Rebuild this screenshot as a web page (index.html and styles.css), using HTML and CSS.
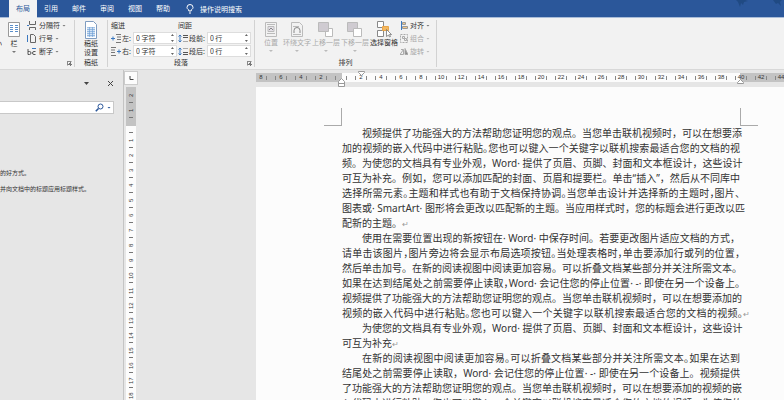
FILE: index.html
```html
<!DOCTYPE html>
<html lang="zh-CN">
	<head>
		<meta charset="utf-8">
		<title>布局</title>
		<link rel="stylesheet" href="styles.css">
	</head>
	<body>
		<!-- 顶部选项卡 -->
		<nav class="tabs">
			<a class="tab active" href="#">布局</a>
			<a class="tab" href="#">引用</a>
			<a class="tab" href="#">邮件</a>
			<a class="tab" href="#">审阅</a>
			<a class="tab" href="#">视图</a>
			<a class="tab" href="#">帮助</a>
			<a class="tell" href="#">
				<svg width="8" height="10" viewBox="0 0 8 10" fill="none" stroke="#fff"><path d="M2.8 7V6C1.6 5.2 1 4.4 1 3.4a3 2.9 0 0 1 6 0C7 4.400 6.400 5.200 5.200 6v1zM3 9h2"/></svg>
				操作说明搜索
			</a>
			<svg class="deco" width="48" height="8" viewBox="0 0 48 8" fill="#204a83"><path d="M0 0h9l3 1-4 1-1 3-2-2-1 4-2-5zM37 0h9l-2 2 1 4-3-3-2 1z"/></svg>
		</nav>

		<!-- 功能区 -->
		<div class="ribbon">
			<section class="group setup">
				<div class="tools">
					<button class="big cut"><span>小</span></button>
					<button class="big col">
						<svg width="14" height="17" viewBox="0 0 14 17"><path d="M1.5 1.5h11v14h-11z" fill="#fff" stroke="#999"/><path d="M3 4.500h3M8 4.500h3M3 6.500h3M8 6.500h3M3 8.500h3M8 8.500h3M3 10.500h3M8 10.500h3" stroke="#5b8fca"/></svg>
						<span>栏</span><i class="down"></i>
					</button>
					<div class="stack">
						<button><svg width="10" height="9" viewBox="0 0 10 9" fill="none" stroke="#666"><path d="M2.500 0v3.500h6V0M2.500 9V6.500h6V9"/><path d="M0 4.500h2" stroke="#3b78c0"/></svg>分隔符<i class="down"></i></button>
						<button><svg width="10" height="9" viewBox="0 0 10 9" fill="none" stroke="#666"><path d="M3.500.5h3l2 2v6h-5z"/><path d="M.5 1v7" stroke="#3b78c0"/></svg>行号<i class="down"></i></button>
						<button><svg width="10" height="9" viewBox="0 0 10 9" fill="none" stroke="#555"><path d="M1 2v5.500h1.500a1.500 1.500 0 0 0 0-3H1M8.500 4.500H7a1.500 1.500 0 0 0 0 3h1.500"/><path d="M5 1.500h4" stroke="#3b78c0"/></svg>断字<i class="down"></i></button>
					</div>
				</div>
				<h2></h2>
				<button class="launch" aria-label="页面设置"></button>
			</section>

			<section class="group paper">
				<div class="tools">
					<button class="big">
						<svg width="14" height="18" viewBox="0 0 14 18"><path d="M1.500.5h8l3 3v14h-11z" fill="#fff" stroke="#7f9cc0"/><path d="M3 7h8v9H3z" fill="#d3e3f5"/><path d="M3 6.500h8M3 8.500h8M3 10.500h8M3 12.500h8M3 14.500h8M5.500 6v10M8.500 6v10" stroke="#6a9cd4" stroke-width=".6"/></svg>
						<span>稿纸<br>设置</span>
					</button>
				</div>
				<h2>稿纸</h2>
			</section>

			<section class="group para">
				<div class="tools">
					<div class="fields">
						<h3>缩进</h3>
						<label><svg width="10" height="9" viewBox="0 0 10 9"><path d="M0 4.500h4M2 2.500v4" stroke="#3b78c0"/><path d="M5 .5h5M6 3h4M6 5.500h4M5 8.500h5" stroke="#777"/></svg>左:<span class="box"><input type="text" value="0 字符"><i class="spin"></i></span></label>
						<label><svg width="10" height="9" viewBox="0 0 10 9"><path d="M6 4.500h4M8 2.500v4" stroke="#3b78c0"/><path d="M0 .5h5M0 3h4M0 5.500h4M0 8.500h5" stroke="#777"/></svg>右:<span class="box"><input type="text" value="0 字符"><i class="spin"></i></span></label>
					</div>
					<div class="fields">
						<h3>间距</h3>
						<label><svg width="10" height="9" viewBox="0 0 10 9"><path d="M2 1v7M.5 2.500 2 1l1.500 1.500M.5 6.500 2 8l1.500-1.500" fill="none" stroke="#3b78c0"/><path d="M5 1.500h5M5 3.500h5" stroke="#555"/><path d="M5 7.500h5" stroke="#aaa"/></svg>段前:<span class="box"><input type="text" value="0 行"><i class="spin"></i></span></label>
						<label><svg width="10" height="9" viewBox="0 0 10 9"><path d="M2 1v7M.5 2.500 2 1l1.500 1.500M.5 6.500 2 8l1.500-1.500" fill="none" stroke="#3b78c0"/><path d="M5 1.500h5" stroke="#aaa"/><path d="M5 5.500h5M5 7.500h5" stroke="#555"/></svg>段后:<span class="box"><input type="text" value="0 行"><i class="spin"></i></span></label>
					</div>
				</div>
				<h2>段落</h2>
				<button class="launch" aria-label="段落设置"></button>
			</section>

			<section class="group arrange">
				<div class="tools">
					<button class="big off">
						<svg width="14" height="17" viewBox="0 0 14 17" fill="none" stroke="#bbb"><path d="M1.500 1.500h11v14h-11zM3 3.500h8M3 12.500h8"/><path d="M4 5.500h6v5H4z" fill="#e4e0e8"/><path d="m5 9 2-2 2 2" stroke="#888"/></svg>
						<span>位置</span><i class="down"></i>
					</button>
					<button class="big off">
						<svg width="14" height="17" viewBox="0 0 14 17" fill="none" stroke="#bbb"><path d="M1.500 1.500h8l3 3v11h-11zM3 5.500h6M3 13.500h8"/><path d="M4 12V9.500a3 3 0 0 1 6 0V12" stroke="#888"/></svg>
						<span>环绕文字</span><i class="down"></i>
					</button>
					<button class="big off">
						<svg width="15" height="17" viewBox="0 0 15 17" stroke="#bbb"><path d="M7.500 7.500h7v8h-7z" fill="#fff"/><path d="M.5 1.500h10v9H.5z" fill="#cfcbd1"/></svg>
						<span>上移一层</span><i class="down"></i>
					</button>
					<button class="big off">
						<svg width="15" height="17" viewBox="0 0 15 17" stroke="#bbb"><path d="M.5 1.500h10v9H.5z" fill="#cfcbd1"/><path d="M6.500 7.500h8v8h-8z" fill="#fff"/></svg>
						<span>下移一层</span><i class="down"></i>
					</button>
					<button class="big">
						<svg width="16" height="17" viewBox="0 0 16 17" fill="#fff" stroke="#888"><path d="M1.500.5h6v6h-6zM1.500 9.500h6v6h-6z"/><path d="M6.500 5.500h6v4h-6z" fill="#f4b75e" stroke="#e9a64a"/><path d="M10.500 8.500v7l2-1.500 1 2 1-.5-1-2h2z" stroke="#666" stroke-width=".7"/></svg>
						<span>选择窗格</span>
					</button>
					<div class="stack">
						<button><svg width="8" height="9" viewBox="0 0 8 9"><path d="M1.500 0v9" stroke="#3b78c0"/><path d="M2.500 1.500h3v2h-3zM2.500 5.500h5v2h-5z" fill="#f3c888" stroke="#999"/></svg>对齐<i class="down"></i></button>
						<button class="off"><svg width="8" height="9" viewBox="0 0 8 9" fill="none" stroke="#aaa"><path d="M.5.5h7v8h-7z" stroke-dasharray="2 1"/><path d="M2.500 2.500h2v2h-2zM4.500 4.500h2v2h-2z"/></svg>组合<i class="down"></i></button>
						<button class="off"><svg width="8" height="9" viewBox="0 0 8 9" fill="none" stroke="#aaa"><path d="M0 7.500h3.500v-5zM1 2.500h2"/><path d="M5 1.500v6h3z" fill="#888"/></svg>旋转<i class="down"></i></button>
					</div>
				</div>
				<h2>排列</h2>
			</section>
		</div>

		<main class="work">
			<!-- 导航窗格 -->
			<aside class="pane">
				<div class="pane-head">
					<button aria-label="选项"><i class="down"></i></button>
					<button aria-label="关闭"><svg width="7" height="7" viewBox="0 0 7 7" stroke="#444"><path d="m1 1 5 5M6 1 1 6"/></svg></button>
				</div>
				<div class="search">
					<input type="text" aria-label="搜索文档">
					<button aria-label="搜索"><svg width="9" height="9" viewBox="0 0 9 9" fill="none" stroke="#2b579a"><circle cx="5.500" cy="3.500" r="2.500"/><path d="M3.500 5.500.8 8.200" stroke-width="1.600"/></svg></button>
					<i class="down"></i>
				</div>
				<p>的好方式。</p>
				<p>并向文档中的标题应用标题样式。</p>
			</aside>

			<!-- 垂直标尺 -->
			<div class="side">
				<button class="tabstop" aria-label="制表符"><svg width="5" height="5" viewBox="0 0 5 5" fill="none" stroke="#444"><path d="M1 0v3.500h3.500"/></svg></button>
				<div class="vruler">
					<span>2</span><span>1</span><span></span><span>1</span><span>2</span><span>3</span><span>4</span><span>5</span><span>6</span><span>7</span><span>8</span><span>9</span><span>10</span><span>11</span><span>12</span><span>13</span><span>14</span><span>15</span><span>16</span><span>17</span><span>18</span>
				</div>
			</div>

			<div class="editor">
				<!-- 水平标尺 -->
				<div class="hruler">
					<div class="scale">
						<span>8</span><span>6</span><span>4</span><span>2</span><span></span><span>2</span><span>4</span><span>6</span><span>8</span><span>10</span><span>12</span><span>14</span><span>16</span><span>18</span><span>20</span><span>22</span><span>24</span><span>26</span><span>28</span><span>30</span><span>32</span><span>34</span><span>36</span><span>38</span><span>40</span><span>42</span><span>44</span>
					</div>
					<svg class="mark first" width="7" height="5" viewBox="0 0 7 5" fill="#fff" stroke="#999"><path d="M.5.5h6v1l-3 3-3-3z"/></svg>
					<svg class="mark hang" width="7" height="9" viewBox="0 0 7 9" fill="#fff" stroke="#999"><path d="M.5 8.500v-5l3-3 3 3v5zM.5 5.500h6"/></svg>
					<svg class="mark right" width="7" height="5" viewBox="0 0 7 5" fill="#fff" stroke="#999"><path d="M.5 4.500v-1l3-3 3 3v1z"/></svg>
				</div>

				<article class="page">
					<div class="corners"><i></i><i></i></div>
					<div class="doc">
						<p>
							<span class="line">视频提供了功能强大的方法帮助您证明您的观点。当您单击联机视频时，可以在想要添</span>
							<span class="line tight">加的视频的嵌入代码中进行粘贴。您也可以键入一个关键字以联机搜索最适合您的文档的视</span>
							<span class="line">频。为使您的文档具有专业外观，Word· 提供了页眉、页脚、封面和文本框设计，这些设计</span>
							<span class="line">可互为补充。例如，您可以添加匹配的封面、页眉和提要栏。单击“插入”，然后从不同库中</span>
							<span class="line tight">选择所需元素。主题和样式也有助于文档保持协调。当您单击设计并选择新的主题时，图片、</span>
							<span class="line">图表或· SmartArt· 图形将会更改以匹配新的主题。当应用样式时，您的标题会进行更改以匹</span>
							<span class="line end">配新的主题。<b>↵</b></span>
						</p>
						<p>
							<span class="line">使用在需要位置出现的新按钮在· Word· 中保存时间。若要更改图片适应文档的方式，</span>
							<span class="line tight">请单击该图片，图片旁边将会显示布局选项按钮。当处理表格时，单击要添加行或列的位置，</span>
							<span class="line">然后单击加号。在新的阅读视图中阅读更加容易。可以折叠文档某些部分并关注所需文本。</span>
							<span class="line tight">如果在达到结尾处之前需要停止读取，Word· 会记住您的停止位置· -· 即使在另一个设备上。</span>
							<span class="line">视频提供了功能强大的方法帮助您证明您的观点。当您单击联机视频时，可以在想要添加的</span>
							<span class="line tight">视频的嵌入代码中进行粘贴。您也可以键入一个关键字以联机搜索最适合您的文档的视频。<b>↵</b></span>
						</p>
						<p>
							<span class="line">为使您的文档具有专业外观，Word· 提供了页眉、页脚、封面和文本框设计，这些设计</span>
							<span class="line end">可互为补充<b>↵</b></span>
						</p>
						<p>
							<span class="line tight">在新的阅读视图中阅读更加容易。可以折叠文档某些部分并关注所需文本。如果在达到</span>
							<span class="line">结尾处之前需要停止读取，Word· 会记住您的停止位置· -· 即使在另一个设备上。视频提供</span>
							<span class="line">了功能强大的方法帮助您证明您的观点。当您单击联机视频时，可以在想要添加的视频的嵌</span>
							<span class="line">入代码中进行粘贴。您也可以键入一个关键字以联机搜索最适合您的文档的视频。为使您的</span>
						</p>
					</div>
				</article>
			</div>
		</main>
	</body>
</html>
```

FILE: styles.css
```css
*{
	margin: 0;
	padding: 0;
	box-sizing: border-box;
}
body{
	display: flex;
	flex-direction: column;
	height: 100vh;
	overflow: hidden;
	background-color: #e6e6e6;
	color: #333;
	font: 7px/9px "Noto Sans CJK SC", sans-serif;
}
button{
	border: none;
	background: none;
	font: inherit;
	color: inherit;
	white-space: nowrap;
}
svg{
	flex: none;
}
a{
	color: #fff;
	text-decoration: none;
}
/* 下拉小三角 */
.down{
	flex: none;
	width: 4px;
	height: 2px;
	background-color: #777;
	clip-path: polygon(0 0, 100% 0, 50% 100%);
}
/* 选项卡 */
.tabs{
	flex: none;
	display: flex;
	height: 18px;
	padding-left: 9px;
	background-color: #2b579a;
	border-bottom: 1px solid #a9bcd8;
	line-height: 16px;
}
.tab{
	width: 28px;
	text-align: center;
}
.active{
	height: 18px;
	background-color: #f3f3f3;
	color: #2b579a;
}
.tell{
	display: flex;
	align-items: center;
	gap: 6px;
	margin-left: 9px;
}
.deco{
	margin-left: auto;
}
/* 功能区 */
.ribbon{
	flex: none;
	display: flex;
	height: 52px;
	padding: 2px 0;
	background-color: #f2f2f2;
	border-bottom: 1px solid #d8d8d8;
}
.group{
	position: relative;
	display: flex;
	flex-direction: column;
	justify-content: space-between;
	border-right: 1px solid #d2d2d2;
}
.group h2{
	font-size: 7px;
	font-weight: normal;
	text-align: center;
}
.tools{
	display: flex;
}
.big{
	display: flex;
	flex-direction: column;
	align-items: center;
	padding-top: 1px;
}
.big .down{
	margin-top: 3px;
}
.off{
	color: #aaa;
}
.off .down{
	background-color: #bbb;
}
.cut{
	width: 6px;
	padding-top: 19px;
	overflow: hidden;
	align-items: flex-end;
}
.col{
	padding-left: 5px;
}
.col span{
	margin-top: 1px;
}
.stack{
	display: flex;
	flex-direction: column;
	gap: 4px;
	padding: 1px 8px 0 6px;
}
.stack button{
	display: flex;
	align-items: center;
	gap: 2px;
}
.launch{
	position: absolute;
	right: 2px;
	bottom: 1px;
	width: 5px;
	height: 5px;
	border: 1px solid #888;
	border-right-color: transparent;
	border-bottom-color: transparent;
	background: linear-gradient(135deg, transparent 50%, #777 50%);
}
.setup{
	width: 75px;
}
.paper .tools{
	padding: 0 9px;
}
.para .tools{
	gap: 1px;
	padding: 0 3px;
}
.fields{
	display: flex;
	flex-direction: column;
	gap: 1px;
	padding-top: 1px;
}
.fields h3{
	height: 10px;
	font-size: 7px;
	font-weight: normal;
}
.fields label{
	display: flex;
	align-items: center;
	gap: 1px;
}
.box{
	display: flex;
	align-items: center;
	width: 44px;
	height: 12px;
	margin-left: 1px;
	padding: 0 2px;
	background-color: #fff;
	border: 1px solid #ddd;
}
.box input{
	flex: 1;
	min-width: 0;
	border: none;
	font: inherit;
	color: inherit;
}
.spin{
	width: 3px;
	height: 8px;
	background-color: #666;
	clip-path: polygon(50% 0, 100% 25%, 0 25%, 50% 0, 50% 100%, 0 75%, 100% 75%, 50% 100%);
}
.arrange .tools{
	gap: 1px;
	padding-left: 9px;
}
.arrange .tools .big{
	min-width: 14px;
}
.arrange .big:nth-child(2){
	margin-left: 4px;
}
.arrange .stack{
	padding: 1px 6px 0 1px;
}
/* 工作区 */
.work{
	flex: 1;
	display: flex;
	min-height: 0;
}
.pane{
	flex: none;
	width: 124px;
	border-right: 1px solid #c4c4c4;
	overflow: hidden;
	white-space: nowrap;
}
.pane-head{
	display: flex;
	justify-content: flex-end;
	align-items: center;
	gap: 18px;
	height: 31px;
	padding: 0 9px 4px 0;
}
.pane-head button{
	display: flex;
}
.pane-head .down{
	width: 5px;
	height: 3px;
	background-color: #444;
}
.search{
	display: flex;
	align-items: center;
	gap: 3px;
	height: 13px;
	margin: 0 9px 54px 0;
	padding-right: 2px;
	background-color: #fff;
	border: 1px solid #c8c8c8;
	border-left: none;
}
.search input{
	flex: 1;
	min-width: 0;
	border: none;
	outline: none;
	font: inherit;
}
.search button{
	display: flex;
}
.search .down{
	background-color: #2b579a;
}
.pane p{
	margin-bottom: 7px;
	font-size: 6px;
}
/* 垂直标尺 */
.side{
	flex: none;
	width: 14px;
	overflow: hidden;
}
.tabstop{
	display: flex;
	align-items: center;
	justify-content: center;
	width: 14px;
	height: 14px;
	margin-top: 1px;
	background-color: #fcfcfc;
	border: 1px solid #ccc;
}
.vruler{
	width: 10px;
	margin: 2px 0 0 2px;
	padding-top: 1px;
	background: linear-gradient(#c3c3c3 39px, #fcfcfc 39px);
}
.vruler span{
	display: flex;
	align-items: center;
	justify-content: center;
	width: 10px;
	height: 15px;
	font: 6px/10px "Liberation Sans", sans-serif;
	/* 数字朝左侧躺 */
	writing-mode: vertical-rl;
	transform: rotate(180deg);
	background: linear-gradient(#777, #777) center top / 4px 1px no-repeat;
}
/* 编辑区 */
.editor{
	flex: 1;
	display: flex;
	flex-direction: column;
	min-width: 0;
	margin-left: 118px;
}
.hruler{
	flex: none;
	position: relative;
	height: 17px;
	padding-top: 3px;
}
.scale{
	display: flex;
	height: 9px;
	overflow: hidden;
	background: linear-gradient(90deg, #c3c3c3 86px, #fcfcfc 86px, #fcfcfc 484px, #c3c3c3 484px);
}
.scale span{
	flex: none;
	display: flex;
	align-items: center;
	justify-content: space-between;
	width: 20px;
	padding: 0 4px;
	font: 6px/9px "Liberation Sans", sans-serif;
}
.scale span:first-child{
	margin-left: -5px;
}
.scale span::before,
.scale span::after{
	content: "";
	width: 1px;
	height: 4px;
	background-color: #888;
}
.mark{
	position: absolute;
}
.first{
	left: 102px;
	top: 1px;
}
.hang{
	left: 82px;
	top: 8px;
}
.right{
	left: 481px;
	top: 9px;
}
/* 纸张 */
.page{
	flex: 1;
	min-height: 0;
	overflow: hidden;
	padding: 21px 26px 0 68px;
	background-color: #fcfcfc;
}
.corners{
	display: flex;
	justify-content: space-between;
}
.corners i{
	width: 18px;
	height: 18px;
	border: solid #aaa;
	border-width: 0 1px 1px 0;
}
.corners i:last-child{
	border-width: 0 0 1px 1px;
}
.doc{
	margin: 0 18px;
	font: 10px/15px "Noto Sans", "Noto Sans CJK SC", sans-serif;
	color: #333;
}
.line{
	display: block;
	height: 15px;
	white-space: nowrap;
	text-align: justify;
	text-align-last: justify;
}
/* 首行缩进两个字 */
.line:first-child{
	padding-left: 20px;
}
/* 标点压缩的行 */
.tight{
	font-feature-settings: "halt";
}
.end{
	text-align-last: left;
}
.line b{
	margin-right: -10px;
	font-weight: normal;
	font-size: 8px;
	color: #999;
}
```
